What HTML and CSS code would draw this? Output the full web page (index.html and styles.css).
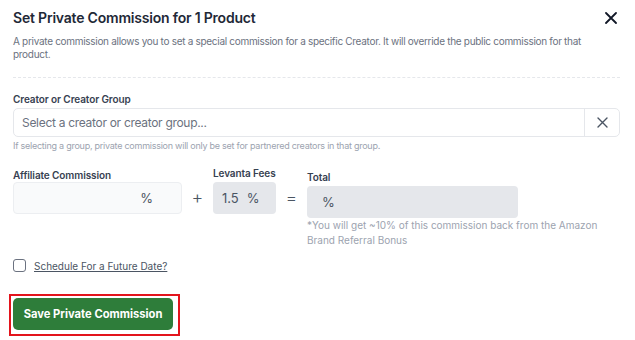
FILE: index.html
```html
<!DOCTYPE html>
<html lang="en">
<head>
    <meta charset="UTF-8">
    <meta name="viewport" content="width=device-width, initial-scale=1.0">
    <title>Set Private Commission</title>
    <link rel="stylesheet" href="styles.css">
</head>
<body>
    <div class="modal">
        <div class="modal-header">
            <h1>Set Private Commission for 1 Product</h1>
            <button class="close-btn" aria-label="Close">
                <svg width="12" height="12" viewBox="0 0 12 12"><path d="M1 1L11 11M11 1L1 11" stroke="#111827" stroke-width="1.8" stroke-linecap="round"/></svg>
            </button>
        </div>
        <p class="intro">A private commission allows you to set a special commission for a specific Creator. It will override the public commission for that product.</p>

        <div class="divider"></div>

        <div class="form-group">
            <label class="field-label">Creator or Creator Group</label>
            <div class="select-box">
                <input type="text" placeholder="Select a creator or creator group...">
                <button class="clear-btn" aria-label="Clear">
                    <svg width="11" height="11" viewBox="0 0 11 11"><path d="M1 1L10 10M10 1L1 10" stroke="#4b5563" stroke-width="1.4" stroke-linecap="round"/></svg>
                </button>
            </div>
            <p class="hint">If selecting a group, private commission will only be set for partnered creators in that group.</p>
        </div>

        <div class="commission-row">
            <div class="field affiliate">
                <label class="field-label">Affiliate Commission</label>
                <div class="pct-box light">
                    <span class="pct">%</span>
                </div>
            </div>
            <span class="op">+</span>
            <div class="field fees">
                <label class="field-label">Levanta Fees</label>
                <div class="pct-box grey">
                    <span class="value">1.5</span>
                    <span class="pct">%</span>
                </div>
            </div>
            <span class="op">=</span>
            <div class="field total">
                <label class="field-label">Total</label>
                <div class="pct-box grey total-box">
                    <span class="pct">%</span>
                </div>
                <p class="note">*You will get ~10% of this commission back from the Amazon Brand Referral Bonus</p>
            </div>
        </div>

        <label class="schedule">
            <span class="checkbox"></span>
            <span class="schedule-text">Schedule For a Future Date?</span>
        </label>

        <div class="save-wrap">
            <button class="save-btn">Save Private Commission</button>
        </div>
    </div>
</body>
</html>
```

FILE: styles.css
```css
body {
    margin: 0;
    font-family: Inter, "Noto Sans", sans-serif;
    background-color: white;
    color: #1f2937;
}
.modal {
    padding: 8px 15px 0 13px;
}
.modal-header {
    display: flex;
    justify-content: space-between;
    align-items: center;
}
h1 {
    margin: 0;
    font-size: 14px;
    font-weight: 600;
    color: #1f2937;
    line-height: 20px;
    letter-spacing: -0.2px;
}
.close-btn {
    background: none;
    border: none;
    padding: 0;
    margin-right: 3px;
    display: flex;
    cursor: pointer;
}
.intro {
    margin: 7px 0 0;
    font-size: 10px;
    line-height: 13px;
    letter-spacing: -0.3px;
    color: #6b7280;
}
.divider {
    margin: 16px 0 0;
    border-top: 1px dashed #e5e7eb;
}
.form-group {
    margin-top: 14px;
}
.field-label {
    display: block;
    font-size: 10px;
    font-weight: 600;
    color: #374151;
    line-height: 14px;
    margin-bottom: 2px;
    letter-spacing: -0.1px;
}
.select-box {
    display: flex;
    height: 29px;
    border: 1px solid #e5e7eb;
    border-radius: 5px;
    box-sizing: border-box;
}
.select-box input {
    flex: 1;
    border: none;
    outline: none;
    padding: 0 8px;
    font-family: inherit;
    font-size: 12px;
    letter-spacing: -0.3px;
    background: transparent;
}
.select-box input::placeholder {
    color: #6b7280;
}
.clear-btn {
    width: 35px;
    border: none;
    border-left: 1px solid #e5e7eb;
    background: none;
    display: flex;
    align-items: center;
    justify-content: center;
    padding: 0;
}
.hint {
    margin: 3px 0 0;
    font-size: 9px;
    letter-spacing: -0.25px;
    color: #9ca3af;
    line-height: 12px;
}
.commission-row {
    display: flex;
    align-items: flex-start;
    margin-top: 17px;
}
.commission-row > * {
    flex-shrink: 0;
}
.commission-row .field-label {
    line-height: 12px;
    white-space: nowrap;
}
.affiliate .field-label {
    margin-bottom: 1px;
}
.pct-box {
    display: flex;
    align-items: center;
    height: 32px;
    box-sizing: border-box;
    border-radius: 4px;
    font-size: 13px;
    color: #4b5563;
}
.light {
    width: 169px;
    background-color: #f9fafb;
    border: 1px solid #eceef1;
    justify-content: flex-end;
    padding-right: 28px;
}
.grey {
    background-color: #e5e7eb;
}
.fees {
    width: 63px;
    margin-top: -2px;
}
.fees .field-label {
    margin-bottom: 3px;
}
.fees .pct-box {
    width: 63px;
    padding-left: 9px;
    gap: 8px;
}
.total {
    width: 300px;
    margin-top: 2px;
}
.total .field-label {
    margin-bottom: 3px;
}
.total-box {
    width: 211px;
    padding-left: 15px;
}
.op {
    width: 31px;
    text-align: center;
    font-size: 18px;
    font-weight: 300;
    color: #4b5563;
    margin-top: 13px;
    line-height: 32px;
}
.note {
    margin: 0;
    font-size: 10px;
    line-height: 15px;
    color: #9ca3af;
}
.schedule {
    display: flex;
    align-items: center;
    gap: 8px;
    margin-top: 11px;
}
.checkbox {
    width: 11px;
    height: 11px;
    border: 1px solid #6b7280;
    border-radius: 3px;
}
.schedule-text {
    font-size: 10px;
    color: #4b5563;
    text-decoration: underline;
}
.save-wrap {
    display: inline-block;
    margin: 22px 0 0 -4px;
    padding: 2px 5px 4px 2px;
    border: 2px solid #e3141c;
}
.save-btn {
    display: block;
    width: 160px;
    height: 32px;
    background-color: #2e7d3a;
    color: white;
    border: none;
    border-radius: 5px;
    font-family: inherit;
    font-size: 11.2px;
    font-weight: 700;
    cursor: pointer;
}
```
